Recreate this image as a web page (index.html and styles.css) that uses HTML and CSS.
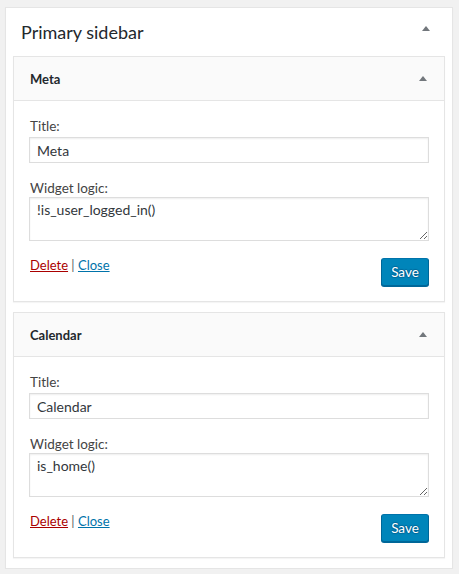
FILE: index.html
```html
<!DOCTYPE html>
<html lang="en">
<head>
<meta charset="utf-8">
<title>Primary sidebar</title>
<link rel="stylesheet" href="styles.css">
</head>
<body>
<div class="sidebar">
  <div class="sidebar-head">
    <h2 class="sidebar-title">Primary sidebar</h2>
    <svg class="toggle toggle-sidebar" width="8" height="5" viewBox="0 0 8 5"><path d="M4 0L8 5H0z"/></svg>
  </div>

  <div class="widget">
    <div class="widget-top">
      <h3 class="widget-title">Meta</h3>
      <svg class="toggle" width="8" height="5" viewBox="0 0 8 5"><path d="M4 0L8 5H0z"/></svg>
    </div>
    <div class="widget-inside">
      <label class="lbl lbl-title">Title:</label>
      <input class="field" type="text" value="Meta">
      <label class="lbl lbl-logic">Widget logic:</label>
      <textarea class="area">!is_user_logged_in()</textarea>
      <div class="controls">
        <div class="links"><a class="del" href="#">Delete</a> | <a class="close" href="#">Close</a></div>
        <button class="save" type="button">Save</button>
      </div>
    </div>
  </div>

  <div class="widget">
    <div class="widget-top">
      <h3 class="widget-title">Calendar</h3>
      <svg class="toggle" width="8" height="5" viewBox="0 0 8 5"><path d="M4 0L8 5H0z"/></svg>
    </div>
    <div class="widget-inside">
      <label class="lbl lbl-title">Title:</label>
      <input class="field" type="text" value="Calendar">
      <label class="lbl lbl-logic">Widget logic:</label>
      <textarea class="area">is_home()</textarea>
      <div class="controls">
        <div class="links"><a class="del" href="#">Delete</a> | <a class="close" href="#">Close</a></div>
        <button class="save" type="button">Save</button>
      </div>
    </div>
  </div>
</div>
</body>
</html>
```
FILE: styles.css
```css
* { box-sizing: border-box; }
html, body { margin: 0; }
body {
  background: #f1f1f1;
  padding: 7px 6px 0 5px;
  font-family: "Lato", "Open Sans", sans-serif;
  font-size: 13.5px;
  color: #444;
}
.sidebar {
  width: 448px;
  background: #fff;
  border: 1px solid #e5e5e5;
  box-shadow: 0 1px 1px rgba(0,0,0,.04);
  padding: 0 7px;
}
.sidebar-head {
  height: 48px;
  display: flex;
  align-items: flex-start;
  justify-content: space-between;
}
.sidebar-title {
  margin: 0;
  padding: 12px 0 0 8px;
  font-size: 18px;
  line-height: 24px;
  font-weight: 400;
  color: #23282d;
}
.toggle { fill: #72777c; display: block; }
.toggle-sidebar { margin: 18px 15px 0 0; }
.widget {
  border: 1px solid #e5e5e5;
  box-shadow: 0 1px 1px rgba(0,0,0,.04);
  background: #fff;
  margin-bottom: 10px;
}
.widget-top {
  height: 44px;
  background: #fafafa;
  border-bottom: 1px solid #e5e5e5;
  display: flex;
  align-items: center;
  justify-content: space-between;
  padding: 1px 17px 0 16px;
}
.widget-top .toggle { margin-top: -1px; }
.widget-title {
  margin: 0;
  font-size: 13px;
  font-weight: 700;
  color: #23282d;
}
.widget-inside {
  padding: 16px 15px 15px;
  display: flex;
  flex-direction: column;
}
.lbl {
  display: block;
  line-height: 18px;
  color: #444;
  padding-left: 1px;
}
.lbl-logic { margin-top: 17px; line-height: 17px; }
.field, .area {
  font-family: inherit;
  font-size: 14px;
  color: #32373c;
  border: 1px solid #ddd;
  box-shadow: inset 0 1px 2px rgba(0,0,0,.07);
  background: #fff;
  width: 100%;
  margin: 0;
  outline: none;
}
.field {
  height: 26px;
  margin-top: 2px;
  padding: 0 7px;
}
.area {
  height: 44px;
  padding: 2px 7px;
  line-height: 19.6px;
  resize: vertical;
  display: block;
}
.controls {
  margin-top: 15px;
  display: flex;
  justify-content: space-between;
  align-items: flex-start;
}
.links { line-height: 18px; color: #555d66; font-size: 13px; padding-left: 1px; }
.links a { text-decoration: underline; }
.del { color: #a00; }
.close { color: #0073aa; }
.save {
  margin-top: 2px;
  height: 28px;
  width: 48px;
  padding: 0 0 1px;
  font-family: inherit;
  font-size: 13.5px;
  line-height: 26px;
  color: #fff;
  background: #0085ba;
  border: 1px solid;
  border-color: #0073aa #006799 #006799;
  border-radius: 3px;
  box-shadow: 0 1px 0 #006799;
  text-shadow: 0 -1px 1px #006799, 1px 0 1px #006799, 0 1px 1px #006799, -1px 0 1px #006799;
}
```
